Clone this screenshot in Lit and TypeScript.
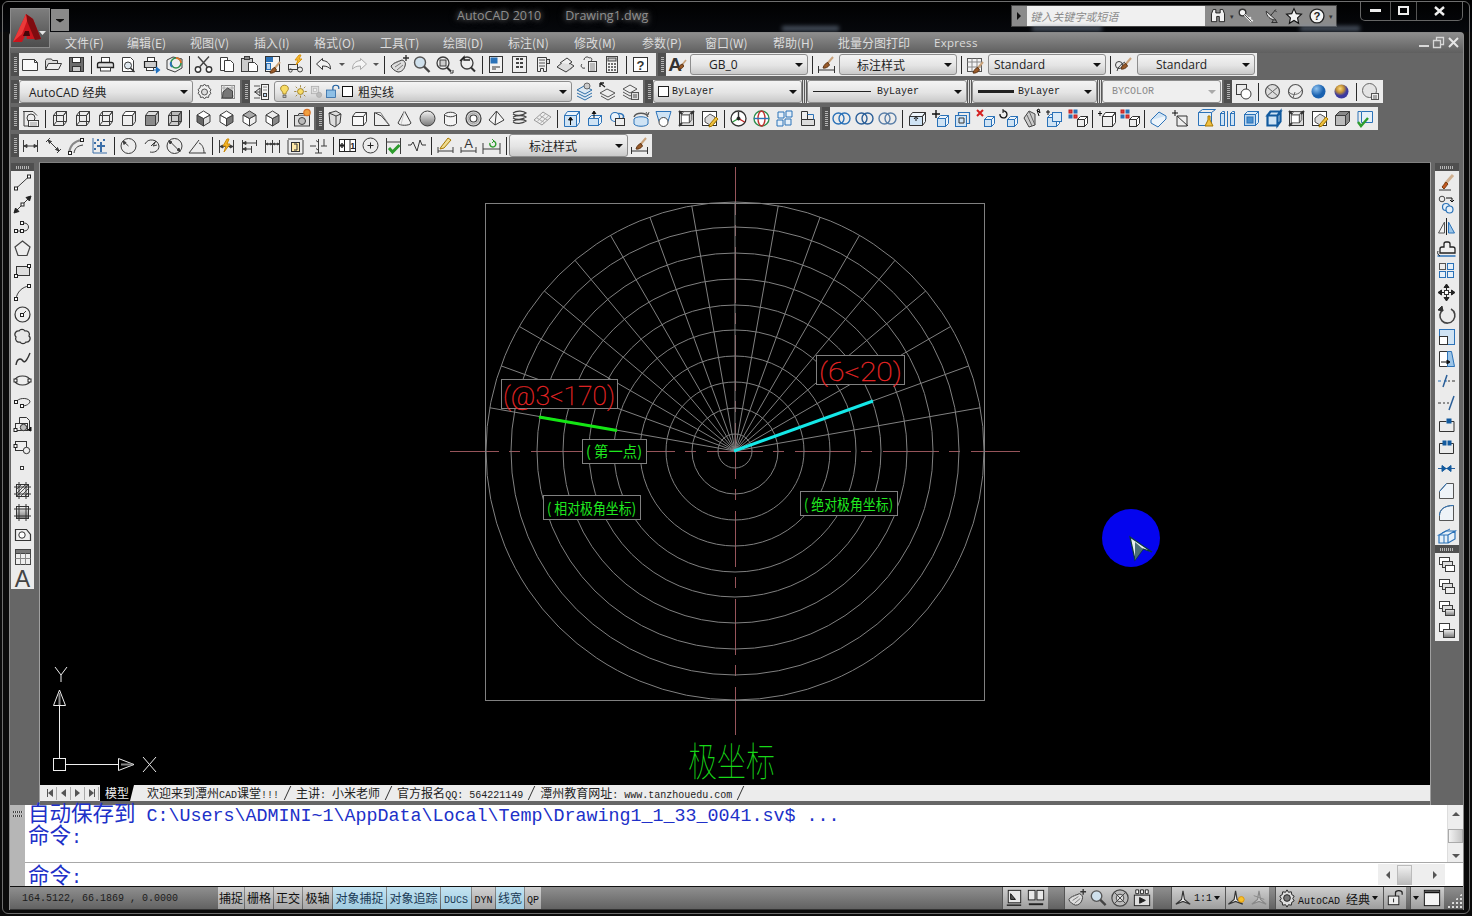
import { LitElement, html, svg, css } from "lit";
import { customElement } from "lit/decorators.js";
import { unsafeSVG } from "lit/directives/unsafe-svg.js";

const D = "#3c3c3c";
const B = "#2b72b8";
const M = "#7a7a7a";

const p = (d: string, s = D, f = "none", w = 1) =>
	`<path d="${d}" stroke="${s}" fill="${f}" stroke-width="${w}"/>`;
const r = (x: number, y: number, w: number, h: number, s = D, f = "none") =>
	`<rect x="${x}" y="${y}" width="${w}" height="${h}" stroke="${s}" fill="${f}"/>`;
const c = (x: number, y: number, rad: number, s = D, f = "none", w = 1) =>
	`<circle cx="${x}" cy="${y}" r="${rad}" stroke="${s}" fill="${f}" stroke-width="${w}"/>`;
const n = (x: number, y: number) => r(x - 1.5, y - 1.5, 3, 3, "#222", "#fff");
const t = (s: string, x: number, y: number, size: number, fill = "#333", weight = 700) =>
	`<text x="${x}" y="${y}" font-size="${size}" font-weight="${weight}" fill="${fill}" font-family="Liberation Sans, sans-serif" text-anchor="middle">${s}</text>`;

// wire cube, faces can be shaded
const cube = (s = D, front = "none", top = "none", side = "none", back = false) =>
	p("M5.5 8.5h10v10h-10z", s, front) +
	p("M5.5 8.5l3-4h10l-3 4z", s, top) +
	p("M15.5 8.5l3-4v10l-3 4z", s, side) +
	(back ? p("M8.5 4.5v10h10M8.5 14.5l-3 4", s) : "");
const hexa = (a: string, b: string, e: string) =>
	p("M11.5 11.5L5 8v7l6.5 4z", D, a) + p("M11.5 11.5L18 8v7l-6.5 4z", D, b) + p("M11.5 4L18 8l-6.5 3.5L5 8z", D, e);
const brush = (x = 0, y = 0) =>
	`<g transform="translate(${x} ${y})">` + p("M17 4L11 11", "#c9a27a", "none", 2) + p("M12 9.5c-2 .5-4 2-5 5.5 2 .5 5-.5 6.5-3z", "#5c3517", "#9a5a28") + "</g>";
const dim = (s = D) => p("M4.5 6v13M18.5 6v13M4.5 12.5h14", s) + p("M5 12.5l3-1.5v3zM18 12.5l-3-1.5v3z", s, s);
const draw = (a: string, b: string) =>
	r(4.5, 4.5, 10, 7, D, a) + r(7.5, 8.5, 10, 6, D, "#ddd") + r(10.5, 12.5, 9, 6, D, b);
const ring = (x: number, s = B) => c(x, 11.5, 5.5, s, "none", 1.4);

const ic: Record<string, string> = {
	new: p("M3.5 6.5h12l3 3v8h-15z", D, "#fafafa") + p("M15.5 6.5v3h3"),
	open: p("M3.5 16.5v-9l1-1.5h5l1 1.5h5v2.5", D, "#ddd") + p("M3.5 16.5l3-6h13l-3 6z", D, "#eee"),
	save: r(4.5, 4.5, 14, 14, "#333", "#6c6c6c") + r(7.5, 4.5, 8, 5, "#333", "#fff") + r(7.5, 13.5, 8, 5, "#333", "#ccc"),
	plot: r(7.5, 4.5, 8, 5, D, "#fff") + p("M5.5 9.5h12q2 0 2 2v3h-16v-3q0-2 2-2z", "#222", "#ddd", 1.3) + r(6.5, 14.5, 10, 3.5, D, "#fff"),
	prev: p("M5.5 4.5h8l3 3v11h-11z", D, "#fff") + c(11, 12.5, 3.5, D, "#dfe8ef") + p("M13.5 15l4 4", "#333", "none", 1.6),
	pub: r(7.5, 4.5, 7, 4, D, "#fff") + p("M4.5 8.5h12v6h-12z", "#222", "#ccc", 1.2) + r(6.5, 14.5, 7, 3, D, "#fff") + p("M13 17h5M16.5 14.5l3 2.5-3 2.5z", "#1c6fc0", "#1c6fc0", 1.2),
	dwf: p("M4 7l6-3 9 2v9l-7 4-8-3z", D, "#eee") + c(13, 10, 5, "#2f8f4f", "none", 1.6) + p("M13 5a5 5 0 0 1 5 5", "#e0702a", "none", 1.8) + p("M9 14a5 5 0 0 1-1-5", "#2b72b8", "none", 1.8),
	cut: p("M6 3.5l9 10M17 3.5l-9 10", "#444", "none", 1.4) + c(6, 16.5, 2.7, "#333", "#fff", 1.4) + c(17, 16.5, 2.7, "#333", "#fff", 1.4),
	copy: p("M5.5 4.5h7v13h-7z", D, "#fff") + p("M9.5 7.5h6l3 3v8h-9z", D, "#fff"),
	paste: r(3.5, 5.5, 11, 13, D, "#ccc") + r(6.5, 3.5, 5, 3, D, "#888") + p("M10.5 9.5h6l3 3v6h-9z", D, "#fff"),
	match: r(4.5, 3.5, 14, 15, "#333", "#f4f4f4") + r(5.5, 4.5, 6, 4, "#2b72b8", "#2b72b8") + r(5.5, 10.5, 4, 6, "#2b72b8", "#bcd6ee") + brush(2, 5),
	blk: r(4.5, 11.5, 9, 5, D, "#eee") + c(6.5, 17.5, 1.6) + c(16, 16.5, 2.5) + p("M15 2l-4 5h3l-2 5 6-6h-3l2-4z", "#d9940f", "#f7b92b"),
	undo: p("M9.5 5.5l-6 5.5 6 5.5v-3.5c4 0 6 1 8 3 0-5-3-8-8-8.5z", "#333", "#f2f2f2"),
	redo: p("M13.5 5.5l6 5.5-6 5.5v-3.5c-4 0-6 1-8 3 0-5 3-8 8-8.5z", "#aaa", "#f5f5f5"),
	pan: p("M4 13c2-2 3-3 6-4l5-2c3 1 4 3 3 6-1 4-4 6-7 6-3-1-6-3-7-6z", D, "#ddd") + p("M6 11l6-3M8 14l6-4M10 17l6-5", M) + p("M16 5h6M19 2v6", "#333", "none", 1.4),
	zoom: c(10, 9.5, 5.5, "#555", "#cfe0ec", 1.4) + p("M14 13.5l5.5 5.5", "#444", "none", 2.4),
	zoomw: c(10, 10, 6, D, "#eee", 1.3) + r(7, 7, 6, 6, D, "#ccc") + p("M14 14.5l4 4", "#333", "none", 2) + p("M17 20h3v-3", "#333"),
	zoomp: c(11, 10, 6, D, "#eee", 1.3) + p("M15 14.5l4 4", "#333", "none", 2) + p("M4 8l4-4v3h6", "#222", "none", 1.4),
	prop: r(4.5, 3.5, 13, 16, "#333", "#f2f2f2") + r(6, 5, 6, 5, "#2b72b8", "#2b72b8") + p("M7 14h8M7 16h4", "#333"),
	dc: r(4.5, 3.5, 14, 16, "#444", "#eee") + p("M8 6h3M12 6h3M8 10h3M12 10h3M8 14h3M12 14h3", "#444", "none", 2),
	pal: p("M6.5 4.5h9v14h-3v-3h-3v3h-3z", D, "#eee") + p("M8 7h6M8 10h6M8 13h6", "#888", "none", 1.6) + r(15.5, 6.5, 3, 4, D, "#ddd"),
	sheet: p("M3 14l8-7 9 6-8 6z", D, "#ddd") + p("M6 10l7-5 5 4-3 2", D, "#eee") + p("M5 12l3-2M15 17l3-2", M),
	mark: p("M7 7c0-3 4-4 5-2 2-1 4 1 2 3M5 11c-2 2 0 5 3 4", D, "none") + r(11.5, 8.5, 8, 10, D, "#eee") + p("M13 11h5M13 13h5M13 15h5M13 17h5", "#888"),
	calc: r(6.5, 3.5, 11, 16, "#444", "#f5f5f5") + r(8, 5, 8, 3, "#444", "#ccc") + p("M8 11h2M11 11h2M14 11h2M8 14h2M11 14h2M14 14h2M8 17h2M11 17h2M14 17h2", "#444", "none", 1.5),
	help: r(4.5, 4.5, 14, 14, "#333", "#fff") + t("?", 11.5, 16.5, 13),
	tstyle: t("A", 9, 18, 19) + p("M20 7l-4 5", "#c9a27a", "none", 1.6) + p("M16.5 11c-2 .5-3.5 2-4 5 2 .3 4-.5 5.2-3z", "#5c3517", "#9a5a28"),
	dstyle: p("M3.5 13v7M19.5 13v7M3.5 17h16", "#333") + brush(1, 0),
	tbstyle: r(3.5, 5.5, 14, 13, "#555", "#f4f4f4") + p("M3.5 9h14M8 5.5v13M13 5.5v13M3.5 14h14", "#888") + brush(2, 5),
	mstyle: p("M4 18c1-4 4-7 8-9", D) + c(6, 12, 3.5) + brush(1, 1),
	gear: p("M11.5 4l1.5 2 2.500-.5.5 2.500 2 1.500-1 2 1 2-2 1.500-.5 2.500-2.500-.5-1.500 2-1.500-2-2.500.5-.5-2.500-2-1.500 1-2-1-2 2-1.500.5-2.500 2.500.5z", "#555", "#eee") + c(11.5, 12, 3, "#555", "#ddd"),
	wsp: r(5.5, 5.5, 13, 13, "#888", "none") + p("M5 8h14M5 16h14M8 5v14M16 5v14", "#aaa") + p("M7 12l4.500-4 5 3v7h-10z", "#444", "#777"),
	layer: p("M4 6h6M4 12h6M4 18h6", "#555") + p("M5 12l5-4v8z", "#333") + r(11.5, 4.5, 7, 15, D, "#f4f4f4") + r(13.5, 13.5, 3, 3, D, "#bcd6ee") + p("M13 7h4M13 10h4", "#888"),
	lstate: p("M4 10l7-4 8 4-7 4zM4 13l8 4 7-4M4 16l8 4 7-4", "#2f6fa8", "#dbe8f3") + c(14, 6, 3, "#666", "#ccc"),
	lprev: p("M4 13l7-4 8 4-7 4zM5 16l7 4 7-4", "#555", "#eee") + p("M9 7L4 3M4 3v4M4 3h4", "#222", "none", 1.3),
	lcur: p("M4 9l7-4 7 4-7 4zM4 12l7 4 4-2M4 15l7 4 3-1", "#555", "#eee") + r(12.5, 12.5, 7, 7, "#555", "#ddd") + p("M14 15h4M14 17h4", "#555"),
	shade1: r(4.5, 4.5, 10, 10, D) + c(14, 14, 5, D, "#fff"),
	sph0: c(11.5, 11.5, 7, "#555", "#ddd", 1.2) + p("M6 7l11 9M17 7L6 16", "#666"),
	sph1: c(11.5, 11.5, 7, "#555", "#eee", 1.2) + p("M5 12c3 4 10 3 13-2M9 18l2-6", "#666"),
	sph2: `<defs><radialGradient id="bs" cx=".35" cy=".3"><stop offset="0" stop-color="#8fc3f0"/><stop offset="1" stop-color="#1a62b0"/></radialGradient><radialGradient id="os" cx=".4" cy=".3"><stop offset="0" stop-color="#ffd97a"/><stop offset=".55" stop-color="#c09038"/><stop offset="1" stop-color="#3c3aa0"/></radialGradient><linearGradient id="gg" x1="0" y1="0" x2="0" y2="1"><stop offset="0" stop-color="#f4f4f4"/><stop offset="1" stop-color="#777"/></linearGradient></defs>` + c(11.5, 11.5, 7, "none", "url(#bs)"),
	sph3: c(11.5, 11.5, 7, "none", "url(#os)"),
	shade2: c(10.500, 10.500, 7, "#666", "#e4e4e4") + r(12.5, 13.5, 7, 6, "#555", "#eee") + p("M14 16h4M14 18h4", "#666"),
	// row 3 views
	v1: cube(D, "none", "none", "none", true),
	v2: cube(D, "none", "none", "none", true) + p("M8.500 4.500h10", D),
	v3: cube(D, "none", "none", "none", true),
	v4: cube(D, "#eee", "#fff", "#ddd"),
	v5: cube(D, "#8a8a8a", "#ddd", "#bbb"),
	v6: cube(D, "#ccc", "#bbb", "#888", true),
	i1: hexa("#666", "#ddd", "#fff"),
	i2: hexa("#fff", "#777", "#fff"),
	i3: hexa("#fff", "#eee", "#aaa"),
	i4: hexa("#fff", "#888", "#eee"),
	cam: r(4.5, 8.500, 15, 10.500, D, "#ddd") + c(12, 14, 3.5, D, "#bbb") + p("M8 8.500l1-2h5l1 2", D, "#ccc") + c(17, 5.5, 3.2, "#d9742a", "#f0a040", 1.2),
	view: p("M4 4.500h10l4 4", D) + p("M5 4v15h5", D) + c(12, 11, 4, D, "#eee") + r(9.5, 13.5, 10, 6, D, "#f0f0f0") + p("M11 16h7M11 18h7", "#999"),
	polys: p("M5 6l7-2 5 3-1 9-5 4-5-3z", D, "#ddd") + p("M12 9v10M5 6l7 3 5-2", D),
	box: p("M5.5 9.500l3-4h11v9l-3 4h-11z", D, "#f8f8f8") + p("M5.5 9.500h11v9M16.5 9.500l3-4", D),
	wedge: p("M4.500 18.500v-13l7 3.500 8 9.500z", D, "#eee") + p("M4.500 5.500l6 0 9 13", M),
	cone: p("M11.500 4L5 16c1 3 12 3 13 0z", D, "#f2f2f2") + p("M11.500 4L8 17.500", "#ccc"),
	sphere: c(11.5, 11.5, 7.5, D, "url(#gg)"),
	cyl: p("M5.500 7.500c2-3 10-3 12 0v9c-2 3-10 3-12 0z", D, "#f4f4f4") + p("M5.500 7.500c2 3 10 3 12 0", D),
	torus: c(11.5, 11.5, 7.5, D, "#ddd", 1.2) + c(11.5, 11.5, 3.5, D, "#fff", 1.2) + c(11.5, 11.5, 5.5, "#999"),
	pyr: p("M11.500 4L4 13l6 5 9-5z", D, "#f4f4f4") + p("M11.500 4l-1.500 14", D),
	helix: p("M5 6c4-3 11-2 13 0-4 3-10 3-13 1M5 10c4-2 11-2 13 0-4 3-10 3-13 1M5 14c4-2 11-2 13 0-4 3-10 3-13 1", "#444", "none", 1.3),
	planar: p("M3 13l9-8 8 5-9 8z", "#999", "#eee") + p("M6 11l8 5M9 8.500l8 5M6.500 14l8-7M9.500 16l8-7", "#aaa"),
	ext: p("M4.500 8.500h12v11h-12z", B, "#cfe3f4") + p("M4.500 8.500l3-4h12l-3 4zM16.500 8.500l3-4v11l-3 4z", B, "#eaf3fb") + p("M10.500 18v-6", "#111") + p("M10.500 10l-2 3h4z", "#111", "#111"),
	press: p("M5.500 11.500h10v7h-10z", B, "#cfe3f4") + p("M5.500 11.500l3-3h10l-3 3zM15.500 11.500l3-3v7l-3 3z", B, "#eaf3fb") + p("M11 11V5M9 7l2-3 2 3", "#111", "#111"),
	sweep: p("M6 10c0-3 9-5 11-2 2 3-1 5-6 5", B, "none", 1.4) + c(9, 10, 4.5, B, "#eaf3fb", 1.2) + r(9.5, 11.5, 9, 7, "#333", "#eee"),
	rev: p("M5 10c2-5 12-5 14 0", "#555", "none", 1.4) + p("M5 12c2-3 12-3 14 0v5c-2 3-12 3-14 0z", B, "#cfe3f4") + p("M17 5l2 3 1-3", "#555"),
	loft: p("M4 4.500h15l-3 10H7z", B, "#cfe3f4") + c(11.5, 15, 4.500, "#444", "#fff"),
	plan: r(4.5, 4.5, 14, 14, "#333", "#ddd") + cube("#444", "#fff", "#eee", "#ccc").replace(/<path/g, '<path transform="translate(2 1) scale(.8)"') + p("M4 4l3 3M19 4l-3 3M4 19l3-3", "#333", "none", 2),
	edit: r(4.5, 4.5, 14, 14, "#333", "#fff") + p("M7 11l5-4 5 3v6l-5 2-5-3z", "#555", "#ddd") + p("M12 17l6-7 2 2-6 7-3 1z", "#a37a00", "#f0c040"),
	gizmo: c(11.5, 11.5, 7.5, "#333", "#fff", 1.3) + p("M11.500 11.500V5", "#333", "none", 1.4) + p("M11.500 11.500L5.500 15", "#2b9c3e", "none", 1.4) + p("M11.500 11.500l6 3.500", "#c02020", "none", 1.4) + c(11.5, 11.5, 1.5, "#222", "#222"),
	orbit: c(11.5, 11.5, 7.5, "#2f8f4f", "#fff", 1.4) + `<ellipse cx="11.5" cy="11.5" rx="3.500" ry="7.500" stroke="#c03030" fill="none" stroke-width="1.400"/>` + p("M4 11.500h15", "#2b72b8", "none", 1.4),
	arr3: p("M5 5h6v6H5zM13 4h6v6h-6zM4 13h6v6H4zM12 12h6v6h-6z", B, "#e6f0f9"),
	align: p("M5.500 4.500h6v8h-6z", "#333", "#eee") + p("M5.500 12.500h13v6h-13z", "#333", "#ddd") + p("M11.500 7.500h6v5", B),
	r1: ring(8.5) + ring(14.5),
	r2: ring(8.5, "#2b5f98") + ring(14.5, "#2b5f98"),
	r3: ring(8.5, "#5a7fa8") + ring(14.5, "#5a7fa8"),
	fext: p("M4.500 9.500h13v9h-13z", "#333", "#cfe3f4") + p("M4.500 9.500l3-4h13l-3 4zM17.500 9.500l3-4v9l-3 4z", "#333", "#eef5fb") + p("M11 14V11M9 12l2-2.500 2 2.500", "#111"),
	fmove: p("M8 3v8M4 7h8", "#111", "none", 1.4) + r(9.5, 11.5, 8, 8, B, "#cfe3f4") + p("M9.500 11.500l3-3h8l-3 3zM17.500 11.500l3-3v8l-3 3z", B, "#eef5fb"),
	foff: r(4.5, 8.5, 11, 11, B, "#cfe3f4") + p("M7.500 8.500v-3h11v11h-3", B, "none", 1.2) + p("M8 11h5v5h-5z", "#333"),
	fdel: p("M3 3l6 6M9 3L3 9", "#d42020", "none", 2) + r(10.5, 12.5, 7, 7, B, "#cfe3f4") + p("M10.500 12.500l3-3h7l-3 3zM17.500 12.500l3-3v7l-3 3z", B, "#eef5fb"),
	frot: p("M3 7a3.500 3.500 0 1 0 3-3", "#111", "none", 1.3) + p("M6 2v4", "#111") + r(10.5, 12.5, 7, 7, B, "#cfe3f4") + p("M10.500 12.500l3-3h7l-3 3zM17.500 12.500l3-3v7l-3 3z", B, "#eef5fb"),
	ftap: p("M4 11l5-7 6 3v11l-6 2z", "#444", "#ccc") + p("M9 4l6 14M7 8l5 11", "#666") + p("M17 3l3 3-1-4zM17 3l2 6", "#111"),
	fcopy: r(4.5, 10.5, 9, 9, B, "#cfe3f4") + p("M4.500 10.500l3-3h9l-3 3zM13.500 10.500l3-3v9l-3 3z", B, "#eef5fb") + r(9.5, 5.5, 9, 9, B, "#dcebf7") + p("M5 3v5M3 5h4", "#111"),
	fcolor: r(3, 3, 3, 3, "#c02020", "#e04040") + r(8, 3, 3, 3, "#2b72b8", "#2b72b8") + r(3, 8, 3, 3, "#2b72b8", "#2b72b8") + r(8, 8, 3, 3, "#c02020", "#e04040") + r(11.5, 12.5, 7, 7, "#333", "#eee") + p("M11.500 12.500l3-3h7l-3 3zM18.500 12.500l3-3v7l-3 3z", "#333", "#fff"),
	eimp: p("M5 4v5M3 6.500h4", "#111") + r(7.5, 9.5, 10, 10, "#333", "#eee") + p("M7.500 9.500l3-4h10l-3 4zM17.500 9.500l3-4v10l-3 4z", "#333", "#fff"),
	imp: p("M4 13l8-8 7 4-8 8z", B, "#cfe3f4") + p("M4 13v3l7 4 8-8V9", B, "#eef5fb"),
	sep3: p("M5 3v6M2 6h6", "#111") + p("M7 9h10v10H7zM7 9l11 10", "#333", "#eee"),
	clean: p("M5.500 5.500h13v13h-13z", B, "#e2eef8") + p("M5.500 5.500l4-3h13l-4 3", B, "none") + p("M15 9v4l-3 6h8l-3-6V9z", "#a77700", "#f0c040"),
	shell: r(4.5, 6.5, 4, 12, B, "#cfe3f4") + p("M11.500 4v16", B, "none", 1) + r(14.5, 6.5, 4, 12, B, "#cfe3f4") + p("M4.500 6.500l2-2h2v2M14.500 6.500l2-2h2v2", B),
	solidf: r(5.5, 7.5, 11, 11, B, "#bcd6ee") + r(8, 10, 6, 6, B, "#4a90cf") + p("M5.500 7.500l3-3h11l-3 3zM16.500 7.500l3-3v11l-3 3z", B, "#dcebf7"),
	boxbold: p("M5.500 8.500h10v10h-10zM5.500 8.500l3-4h10l-3 4zM15.500 8.500l3-4v10l-3 4z", "#125a9e", "#cfe3f4", 2.2),
	fcheck: p("M4.500 8.500h10v10h-10z", D, "#bbb") + p("M4.500 8.500l4-4h10l-4 4zM14.500 8.500l4-4v10l-4 4z", D, "#888"),
	chk: p("M7.500 4.500h11v11h-11z", B, "#e6f0f9") + p("M4 4.500h3M4 4.500v11", B) + p("M4 15l3 4 7-8", "#2d9c2d", "none", 2.4),
	// row 4 dims
	d1: p("M4.500 6v12M18.500 6v12M4.500 12h14", D) + p("M5 12l3-1.500v3zM18 12l-3-1.500v3z", D, D),
	d2: p("M4 8l4-4M15 19l4-4M6 6l11 11", D) + p("M6 6l3.500 1.500-2 2zM17 17l-3.500-1.500 2-2z", D, D),
	d3: p("M4 19c1-8 6-12 13-13", "#888", "none", 2) + p("M9 19c1-5 3-7 9-8", D) + n(5, 19) + n(17, 6),
	d4: p("M5 4v15h14", "#3a6ea8", "none", 1) + p("M9 6h2M15 6h2M9 12h8M13 8v10M6 9h2M6 15h2", "#3a6ea8", "none", 2),
	d5: c(11.5, 12, 7.5) + p("M11.500 12L6 7", D) + p("M6 7l1 3.500 2-2z", D, D),
	d6: p("M5 10a7.500 7.500 0 0 1 14 2c0 5-5 7-9 6", D) + p("M11 12l5-5-3 5 4-1", D) ,
	d7: c(11.5, 12, 7.5) + p("M6 6.500l11 11", D) + p("M6 6.500l1 3.500 2-2zM17 17.500l-1-3.500-2 2z", D, D),
	d8: p("M3 19h17M3 19l10-13", D) + p("M13 9c3 1 5 5 5 10", D),
	d9: dim() + p("M12 5l-4 7h3l-2 6 6-8h-3l2-5z", "#c98a0a", "#f5b424"),
	d10: p("M4.500 6v13M4.500 9h14M4.500 15h9M18.500 6v6M13.500 12v7", D) + p("M5 9l3-1.500v3zM5 15l3-1.500v3z", D, D),
	d11: p("M4.500 6v13M11.500 6v13M18.500 6v13M4.500 10h14", D) + p("M5 10l2-1v2zM11 10l-2-1v2zM12 10l2-1v2zM18 10l-2-1v2z", D, D),
	d12: p("M4 6v14M19 6v14M4 5h15M4 20h15", D) + r(7.5, 8.5, 8, 9, "#333", "#ffe9a8") + p("M10 10h3v6h-3", "#333"),
	d13: p("M3 12h6M14 12h6M11.500 5v14M8 19h7M17 5v7", D) + p("M11 16l-2-1.500M11 8l-2-1.500", D),
	tol: r(3.5, 5.5, 16, 12, "#222", "#fff") + p("M8.500 5.500v12M14 5.500v12", "#222") + c(6, 11.5, 1.6, "#222") + p("M6 9v5M3.500 11.500h5", "#222") + t("1", 16.700, 15, 9, "#222"),
	center: c(11.5, 11.5, 7.5) + p("M8.500 11.500h6M11.500 8.500v6", "#222"),
	insp: p("M4.500 4v16M18.500 4v16M4.500 8h14", D) + p("M7 14l3.500 4 7-7", "#2d9c2d", "none", 3),
	jog: p("M3 11h3l2-3 4 9 3-11 2 5h4", "#333", "none", 1),
	dimed: p("M4 13v6M19 13v6M4 17h15", D) + p("M7 13l7-9 3 2-7 8-4 1z", "#a77700", "#f0dd90"),
	dimt: p("M4 13v6M19 13v6M4 17h15", D) + t("A", 11.5, 13.5, 13, "#333", 400),
	dimup: p("M3 9v11M20 9v11M3 15h17", D) + p("M10 9a3 3 0 1 0 3-2", "#2d9c2d", "none", 1.4) + p("M12 5l2 2-2 2", "#2d9c2d"),
	// left toolbar
	line: p("M5 17.500L18 5.500") + n(5, 17.5) + n(18, 5.5) ,
	xline: p("M5 18L18 5") + p("M3 20l1.500-5 3.500 3.500zM20 3l-1.500 5-3.500-3.500z", "#222", "#222") + n(11.5, 11.5),
	pline: p("M5 16h8c6 0 6-8 0-8h-2") + n(5, 16) + n(11, 16) + n(11, 8),
	polyg: p("M11.500 4l7.500 6-3 8.500H7L4 10z", "#444", "#ededed", 1.2),
	rect: r(5.5, 7.5, 13, 9, "#333", "#ddd") + n(18, 7) + n(5, 17),
	arc: p("M5 18C6 11 11 6 18 5") + n(5, 18) + n(18, 5),
	circ: c(11.5, 11.5, 7.5, "#333", "#eee", 1.2) + p("M11 12l4-4") + n(11, 12),
	cloud: p("M8 6a3.500 3.500 0 0 1 6 0a3.500 3.500 0 0 1 4 5a3.500 3.500 0 0 1-3 6a3.500 3.500 0 0 1-6 0a3.500 3.500 0 0 1-4-5a3.500 3.500 0 0 1 3-6z", "#333", "#e8e8e8", 1.2),
	spl: p("M5 18c1-7 5-7 7-4s5-3 7-8", "#333", "none", 1.4),
	ell: `<ellipse cx="11.5" cy="11.5" rx="7.500" ry="4.500" stroke="#333" fill="#eee" stroke-width="1.200"/>` + n(4.5, 11.5) + n(18.5, 11.5),
	earc: p("M5 11c2-4 11-5 14-1 0 3-4 5-8 5") + n(5, 11) + n(11, 15),
	ins: p("M8.500 4.500h7l3 3v9h-10z", "#333", "#f0f0f0") + r(4.5, 10.5, 12, 7, "#333", "#eee") + c(12.500, 14.500, 3.2, "#333", "#bbb") + n(4.5, 17) + p("M17 17l3-3v4z", "#111", "#111"),
	mblk: r(4.5, 6.5, 11, 9, "#333", "#eee") + n(4.5, 11) + c(15.5, 15.5, 3.2, "#333", "#eee"),
	pnt: r(9.5, 9.5, 3, 3, "#333", "#fff"),
	hatch: r(5.5, 5.5, 12, 12, "#333", "#e8e8e8") + p("M6 10l4-4M6 14l8-8M6 17l11-11M10 17l7-7M14 17l3-3", "#555") + p("M3 8h17M3 15h17M8 3v17M15 3v17", "#333"),
	grad: r(5.5, 5.5, 12, 12, "#333", "url(#gg)") + p("M3 8h17M3 15h17M8 3v17M15 3v17", "#333"),
	reg: p("M4.500 6.500h11l4 5v6h-15z", "#333", "#eee", 1.2) + c(11, 12, 3.2, "#333", "#fff"),
	table: r(4.5, 4.5, 15, 15, "#444", "#eee") + r(4.5, 4.5, 15, 4, "#444", "#777") + p("M4.500 13.500h15M9.500 8.500v11M14.500 8.500v11", "#888"),
	mtext: t("A", 11.5, 19.5, 23, "#444", 400),
	// right toolbar
	erase: p("M4 19h12", "#333") + p("M18 4l-8 9", "#d0b090", "none", 3) + p("M11 11l-4 5 2 2 4-5z", "#7a3e12", "#c4571e"),
	cpy: c(7, 6, 2.800, "#444") + c(11, 14, 3.500, B, "#e6f0f9", 1.2) + c(14.5, 16.5, 3.500, B, "#e6f0f9", 1.2) + p("M11 5h6v4M15 7l2 2 2-2", "#111"),
	mir: p("M11.500 3v17", "#222") + p("M9.500 7v11h-6z", "#555", "#f2f2f2") + p("M13.500 7v11h6z", B, "#9cc5e8"),
	off: p("M5 16v-4q0-2 2-2h2V7q0-2 2-2h2q2 0 2 2v3h3q2 0 2 2v4z", "#222", "#f0f0f0", 1.3) + p("M2.500 19h18", B, "none", 1.5) + p("M5 19c-2-1-3-3-2-5", "#222"),
	array: r(4.5, 4.5, 6, 6, "#555", "#eee") + r(12.5, 4.5, 6, 6, B, "#e6f0f9") + r(4.5, 12.5, 6, 6, B, "#e6f0f9") + r(12.5, 12.5, 6, 6, B, "#e6f0f9"),
	move: r(9.5, 9.5, 4, 4, "#333", "#fff") + p("M11.500 3l-2.500 3.500h5zM11.500 20l-2.500-3.500h5zM3 11.500l3.500-2.500v5zM20 11.500l-3.500-2.500v5z", "#222", "#222") + p("M11.500 6v3M11.500 14v3M6 11.500h3M14 11.500h3", "#222"),
	rot: p("M16 6a7.500 7.500 0 1 1-8 .500", "#444", "none", 1.6) + p("M7 3l1 5-5-1z", "#333", "#333"),
	scale: r(4.5, 4.5, 15, 15, B, "#cfe3f4") + r(4.5, 11.5, 8, 8, "#333", "#fff"),
	stretch: p("M4.500 4.500h8v15h-8z", "#333", "#fff") + p("M12.500 4.500h4l3 15h-7z", B, "#9cc5e8") + p("M6 15h8", "#111") + p("M15 15l-3-2v4z", "#111", "#111"),
	trim: p("M3 12h3M9 12h3", B, "none", 1.2) + p("M13 12h2M17 12h3", "#333", "none", 1) + p("M8 18l4-12", "#2b5f98", "none", 1.5),
	extd: p("M3 12h3M8 12h2M12 12h2", "#333") + p("M14 19l5-14", "#2b5f98", "none", 1.5),
	bp: p("M4.500 18.500v-10h7M16 8.500h3v10h-14.500", "#333") + r(12, 6, 4, 4, "#125a9e", "#125a9e"),
	brk: p("M4.500 8.500v10h14v-10h-3M8.500 8.500h-4", "#333") + r(8, 6, 3, 4, "#125a9e", "#125a9e") + r(13, 6, 3, 4, "#125a9e", "#125a9e"),
	join: p("M3 11.500h17", "#2b5f98") + p("M7 8.500l4 3-4 3zM16 8.500l-4 3 4 3z", "#125a9e", "#125a9e"),
	chf: p("M4.500 19.500v-7l7-8h7v15z", "#555", "#eef3f8") + p("M4.500 12.500l7-8", B),
	flt: p("M4.500 19.500v-5c0-6 5-10 14-10v15z", "#555", "#eef3f8") + p("M4.500 14.500c0-6 5-10 14-10", B),
	expl: p("M4 12l7-4h9l-7 4zM4 12v8h9v-8M13 12l7-4v8l-7 4", B, "#e6f0f9", 1.2) + p("M9 12v8M7 10l8-4", B) ,
	do1: draw("#fff", "#fff"),
	do2: draw("#fff", "#eee"),
	do3: draw("#fff", "url(#gg)"),
	do4: r(4.5, 4.5, 10, 8, D, "#fff") + r(8.5, 10.5, 11, 8, D, "url(#gg)"),
	// status
	smodel: r(5.5, 3.5, 13, 13, "#222", "#e8e8e8") + p("M8 13V7l5 6z", "#111", "#555") + p("M4 19h15", "#222", "none", 1.5),
	slayout: r(3.5, 3.5, 7, 10, "#222", "#e8e8e8") + r(12.5, 3.5, 7, 10, "#222", "#e8e8e8") + p("M4 18h15", "#222", "none", 2),
	swheel: c(11.5, 11.5, 8.5, "#444", "#bbb", 1.2) + c(11.5, 11.5, 4, "#444", "#ddd") + p("M6 6l11 11M17 6L6 17", "#444"),
	smotion: r(3.5, 8.5, 16, 11, "#222", "#ddd") + p("M5 3h3v4H5zM10 3h3v4h-3zM15 3h3v4h-3z", "#222", "#fff") + p("M9 11l6 3-6 3z", "#222", "#222"),
	sanno: p("M11.500 4l1.500 9 6 5-7.500-3-7.500 3 6-5z", "#333", "#fff", 1.2),
	sanno2: p("M10 4l1.500 9 6 5-7.500-3-7.500 3 6-5z", "#333", "#eee", 1.2) + c(16, 13, 3, "#d9940f", "#f7c02b"),
	sanno3: p("M11.500 4l1.500 9 6 5-7.500-3-7.500 3 6-5z", "#888", "#ccc", 1.2) + p("M6 9l11 4", "#888"),
	sgear: p("M11.500 3l1.500 2.500 3-.5.5 3 2.500 1.500-1.500 2.500 1.500 2.500-2.500 1.500-.5 3-3-.5-1.500 2.500-1.500-2.500-3 .5-.5-3-2.500-1.500 1.500-2.500-1.500-2.500 2.500-1.500.5-3 3 .5z", "#222", "#ddd") + c(11.5, 11.5, 3.5, "#222", "#777"),
	slock: r(4.5, 9.5, 11, 9, "#222", "#eee") + p("M12 9.500V6c0-3 7-3 7 0v2", "#222", "none", 1.3) + p("M10 12v4", "#222"),
	swin: r(3.5, 3.5, 16, 16, "#111", "#f4f4f4") + p("M4 5.500h15", "#111", "none", 2),
	// title search group
	bino: p("M4 9l2-5h3v4h5V4h3l2 5v9h-6v-6h-3v6H4z", "#111", "#f2f2f2"),
	key: c(7.5, 7.5, 3.800, "#333", "#f4f4f4", 1.6) + p("M10 10l8 8M15 15l2-2M17.500 17.500l1.500-1.500", "#f4f4f4", "none", 2.4) + p("M10 10l8 8", "#333"),
	sat: p("M6 6c0 6 5 10 11 10z", "#222", "#ddd") + p("M11 11l6-7M12 19h7M14 16l-1 3M17 16l1 3M16 5l2 2", "#222"),
	star: p("M11.500 3l2.600 5.800 6 .7-4.500 4.200 1.200 6.200-5.300-3.200-5.300 3.200 1.200-6.200-4.500-4.200 6-.7z", "#111", "#f4f4f4", 1.3),
	qmark: c(11.5, 11.5, 8, "#222", "#f4f4f4", 1.5) + t("?", 11.5, 16.5, 13, "#222"),
};

const rows: any[][][] = [
	[
		["new", "open", "save", "|", "plot", "prev", "pub", "dwf", "|", "cut", "copy", "paste", "match", "blk", "|", "undo", "v", "redo", "v", "|", "pan", "zoom", "zoomw", "zoomp", "|", "prop", "dc", "pal", "sheet", "mark", "calc", "|", "help", 3],
		["tstyle", { w: 118, pad: 18, text: "GB_0" }, "|", "dstyle", { w: 118, pad: 17, text: "标注样式" }, "|", "tbstyle", { w: 118, pad: 5, text: "Standard" }, "|", "mstyle", { w: 118, pad: 18, text: "Standard" }],
	],
	[
		[{ w: 174, pad: 9, text: "AutoCAD 经典", flush: true }, "gear", "wsp"],
		["layer", { w: 298, pad: 0, layer: true, text: "粗实线" }, "lstate", "lprev", "lcur"],
		[{ w: 149, pad: 17, text: "ByLayer", swatch: true, mono: true, flush: true }, "||", { w: 160, pad: 0, text: "ByLayer", stroke: 1, mono: true, flush: true }, "||", { w: 125, pad: 0, text: "ByLayer", stroke: 2, mono: true, flush: true }, "||", { w: 119, pad: 9, text: "BYCOLOR", mono: true, off: true, flush: true }],
		["shade1", "|", "sph0", "sph1", "sph2", "sph3", "|", "shade2"],
	],
	[
		["view", "|", "v1", "v2", "v3", "v4", "v5", "v6", "|", "i1", "i2", "i3", "i4", "|", "cam"],
		["polys", "box", "wedge", "cone", "sphere", "cyl", "torus", "pyr", "helix", "planar", "|", "ext", "press", "sweep", "rev", "loft", "plan", "edit", "|", "gizmo", "orbit", "arr3", "align"],
		["r1", "r2", "r3", "|", "fext", "fmove", "foff", "fdel", "frot", "ftap", "fcopy", "fcolor", "|", "eimp", "fcolor", "|", "imp", "sep3", "clean", "shell", "solidf", "boxbold", "plan", "edit", "fcheck", "chk"],
	],
	[
		["d1", "d2", "d3", "d4", "|", "d5", "d6", "d7", "d8", "|", "d9", "d10", "d11", "d12", "d13", "|", "tol", "center", "insp", "jog", "|", "dimed", "dimt", "dimup", "|", { w: 119, pad: 19, text: "标注样式", flush: true }, "dstyle"],
	],
];

const menu: [string, number][] = [
	["文件(F)", 62], ["编辑(E)", 63], ["视图(V)", 64], ["插入(I)", 60], ["格式(O)", 66], ["工具(T)", 63], ["绘图(D)", 65],
	["标注(N)", 66], ["修改(M)", 68], ["参数(P)", 63], ["窗口(W)", 68], ["帮助(H)", 65], ["批量分图打印", 96], ["Express", 50],
];
const leftTools = ["line", "xline", "pline", "polyg", "rect", "arc", "circ", "cloud", "spl", "ell", "earc", "ins", "mblk", "pnt", "hatch", "grad", "reg", "table", "mtext"];
const rightTools = ["erase", "cpy", "mir", "off", "array", "move", "rot", "scale", "stretch", "trim", "extd", "bp", "brk", "join", "chf", "flt", "expl"];
const orderTools = ["do1", "do2", "do3", "do4"];
const toggles: [string, number, boolean][] = [
	["捕捉", 26, false], ["栅格", 28, false], ["正交", 28, false], ["极轴", 29, false], ["对象捕捉", 53, true], ["对象追踪", 53, true],
	["DUCS", 30, true], ["DYN", 23, false], ["线宽", 28, true], ["QP", 16, false],
];
const tabs = ["欢迎来到潭州CAD课堂!!!", "主讲: 小米老师", "官方报名QQ: 564221149", "潭州教育网址: www.tanzhouedu.com"];
const glows = [[782, 57], [1032, 70], [1300, 60]];

// ring radii and polar spokes of the sheet
const CX = 735;
const CY = 451;
const radii = [17, 43, 69, 95, 121, 146, 172, 198, 224, 249];
const spokes = Array.from({ length: 17 }, (_, i) => (i + 1) * 10);

const labels = [
	{ x: 501, y: 379, w: 116, h: 29, text: "(@3<170)", tx: 503, ty: 405, tw: 112, size: 26, cls: "red" },
	{ x: 816, y: 355, w: 88, h: 29, text: "(6<20)", tx: 819, ty: 381, tw: 83, size: 26, cls: "red" },
	{ x: 582, y: 439, w: 64, h: 24, text: "( 第一点)", tx: 586, ty: 457, tw: 56, size: 15, cls: "grn" },
	{ x: 543, y: 495, w: 97, h: 24, text: "( 相对极角坐标)", tx: 547, ty: 514, tw: 89, size: 15, cls: "grn" },
	{ x: 800, y: 491, w: 97, h: 24, text: "( 绝对极角坐标)", tx: 804, ty: 510, tw: 89, size: 15, cls: "grn" },
];

@customElement("app-root")
export class AppRoot extends LitElement {
	static styles = css`
		:host {
			display: block;
			position: relative;
			width: 1472px;
			height: 916px;
			overflow: hidden;
			background: #0a0a0a;
			font-family: "Noto Sans CJK SC", "Open Sans", sans-serif;
			color: #111;
		}
		svg { display: block; flex: none; }
		.lat { font-family: "Liberation Mono", monospace; font-size: 0.8334em; }
		.outline {
			position: absolute;
			inset: 1px 2px 2px 2px;
			border: 1px solid #6e6e6e;
			border-radius: 6px;
			pointer-events: none;
		}
		.glow {
			position: absolute;
			top: 26px;
			height: 5px;
			background: #7d8da3;
			filter: blur(2px);
			opacity: 0.55;
		}
		.title {
			height: 32px;
			box-sizing: border-box;
			display: flex;
			align-items: flex-start;
			padding: 8px 0 0 10px;
			background: linear-gradient(#000, #06080c);
			position: relative;
		}
		.app {
			width: 40px;
			height: 40px;
			background: linear-gradient(#7d7d7d, #4d4d4d);
			border: 1px solid #8c8c8c;
			box-sizing: border-box;
			position: relative;
			z-index: 2;
		}
		.qat {
			width: 18px;
			height: 22px;
			margin: 1px 0 0 1px;
			background: #8a8a8a;
			display: flex;
			align-items: center;
			justify-content: center;
		}
		.qat i { width: 8px; height: 5px; background: #111; clip-path: polygon(0 30%, 100% 30%, 100% 45%, 50% 100%, 0 45%); }
		.cap {
			color: #8e8e8e;
			font: 12.500px "Open Sans", sans-serif;
			text-shadow: 0 0 5px #666, 0 0 9px #666;
			margin-top: 0;
			line-height: 16px;
		}
		.cap.a { margin-left: 388px; }
		.cap.b { margin-left: 24px; }
		.search {
			margin: -3px 0 0 363px;
			width: 326px;
			height: 22px;
			background: #8b8b8b;
			display: flex;
			align-items: center;
			border: 1px solid #444;
			box-sizing: border-box;
		}
		.search .tri { width: 0; height: 0; margin: 0 6px 0 5px; border-left: 4px solid #111; border-top: 4px solid transparent; border-bottom: 4px solid transparent; }
		.search .box {
			width: 178px;
			height: 20px;
			background: #f0f0f0;
			color: #8a8a8a;
			font-style: italic;
			font-size: 11px;
			line-height: 21px;
			padding-left: 3px;
			box-sizing: border-box;
			margin-right: 2px;
		}
		.search svg { width: 20px; height: 20px; margin-left: 1px; }
		.mini { font-size: 7px; color: #333; width: 7px; text-align: center; }
		.wbtns {
			margin: -7px 0 0 23px;
			display: flex;
			height: 19px;
			border: 1px solid #666;
			border-top: none;
			border-radius: 0 0 5px 5px;
			box-sizing: content-box;
		}
		.wbtns div { display: flex; align-items: center; justify-content: center; border-left: 1px solid #555; }
		.wbtns div:first-child { width: 29px; border-left: none; }
		.wbtns div:nth-child(2) { width: 25px; }
		.wbtns div:nth-child(3) { width: 45px; }

		.win {
			margin: 0 8px 0 9px;
			width: 1455px;
			box-sizing: border-box;
			border-left: 1px solid #8a8a8a;
			border-right: 1px solid #8a8a8a;
			border-top: 1px solid #888;
			border-radius: 4px 4px 0 0;
			background: #666;
			position: relative;
		}
		.menu {
			height: 20px;
			box-sizing: border-box;
			padding-bottom: 2px;
			background: linear-gradient(#8d8d8d, #5f5f5f);
			display: flex;
			align-items: center;
			padding-left: 55px;
			color: #dcdcdc;
			font-size: 12px;
			position: relative;
		}
		.menu span { flex: none; white-space: nowrap; }
		.menu .en { font-family: "Open Sans", sans-serif; font-size: 11.500px; letter-spacing: 0.3px; }
		.mdi { position: absolute; right: 2px; top: 2px; display: flex; }
		.rows {
			padding: 0 0 0 1px;
			display: flex;
			flex-direction: column;
			gap: 4px;
		}
		.row { display: flex; height: 23px; gap: 2px; }
		.bar { display: flex; height: 23px; }
		.grip {
			width: 8px;
			flex: none;
			background-color: #4f4f4f;
			background-image: repeating-linear-gradient(#b5b5b5 0 1px, #4f4f4f 1px 2px);
			background-size: 3px 15px;
			background-position: center;
			background-repeat: no-repeat;
		}
		.body {
			display: flex;
			align-items: center;
			background: #ececec;
			padding-right: 1px;
			height: 23px;
		}
		.ic { width: 23px; height: 23px; flex: none; }
		.sep { width: 6px; flex: none; display: flex; justify-content: center; }
		.sep::after { content: ""; width: 1px; height: 18px; background: #2a2a2a; }
		.dsep { width: 5px; height: 23px; flex: none; background: #5a5a5a; display: flex; justify-content: center; gap: 1px; }
		.dsep::before, .dsep::after { content: ""; width: 1px; background: #ddd; }
		.drop { width: 11px; flex: none; display: flex; justify-content: center; }
		.drop::after { content: ""; border-top: 3px solid #555; border-left: 3px solid transparent; border-right: 3px solid transparent; }
		.spacer { flex: none; }
		.combo {
			height: 21px;
			flex: none;
			margin: 0 1px;
			border: 1px solid #8d8d8d;
			border-radius: 3px;
			box-sizing: border-box;
			background: linear-gradient(#f4f4f4, #e4e4e4 55%, #c9c9c9);
			display: flex;
			align-items: center;
			position: relative;
			font: 12px "Open Sans", "Noto Sans CJK SC", sans-serif;
			color: #222;
			white-space: nowrap;
		}
		.combo.flush { margin: 0; height: 23px; }
		.combo.off { background: #efefef; color: #8a8a8a; }
		.combo.mono { font-family: "Liberation Mono", "Noto Sans CJK SC", monospace; font-size: 10px; }
		.combo.off::after { border-top-color: #aaa; }
		.combo::after {
			content: "";
			position: absolute;
			right: 4px;
			top: 50%;
			margin-top: -2px;
			border-top: 4px solid #111;
			border-left: 4px solid transparent;
			border-right: 4px solid transparent;
		}
		.combo .sw { width: 11px; height: 11px; border: 1px solid #222; background: #fff; box-sizing: border-box; margin: 0 3px 0 -13px; }
		.combo .st { margin: 0 0 0 5px; background: #222; flex: none; }
		.combo .st.t1 { height: 1px; width: 58px; margin-right: 6px; }
		.combo .st.t2 { height: 3px; width: 36px; margin-right: 4px; }
		.combo .ci { width: 17px; height: 17px; margin-right: -1px; }
		.combo .lt { margin-left: 5px; color: #222; }
		.combo .lsq { width: 9px; height: 9px; border: 1px solid #111; background: #fff; margin: 0 0 0 2px; box-sizing: content-box; }

		.main { display: flex; padding-top: 5px; height: 648px; box-sizing: border-box; position: relative; }
		.lcol { width: 29px; flex: none; padding: 1px 0 0 1px; box-sizing: border-box; }
		.rcol { width: 32px; flex: none; padding: 1px 0 0 4px; box-sizing: border-box; }
		.vbar { width: 23px; background: #ebebeb; box-sizing: border-box; }
		.rcol .vbar { width: 24px; }
		.vgrip {
			height: 8px;
			background-color: #4f4f4f;
			background-image: repeating-linear-gradient(90deg, #b5b5b5 0 1px, #4f4f4f 1px 2px);
			background-size: 14px 3px;
			background-position: center;
			background-repeat: no-repeat;
		}
		.vbar .vic { width: 23px; height: 22px; display: flex; align-items: center; justify-content: center; }
		.view { width: 1392px; flex: none; border-left: 1px solid #a0a0a0; border-right: 1px solid #a0a0a0; border-top: 1px solid #808080; box-sizing: border-box; }
		.sheet { width: 1390px; height: 622px; background: #000; overflow: visible; }
		.sheet text { font-family: "Roboto", "Noto Sans CJK SC", sans-serif; }
		.sheet .red { fill: #ff3030; stroke: #e02020; stroke-width: 0.3px; font-weight: 100; }
		.sheet .grn { fill: #1fe81f; font-family: "Noto Sans CJK SC", sans-serif; }
		.sheet .big { fill: #18d818; font-family: "Noto Sans CJK SC", sans-serif; font-weight: 100; }
		.tabs {
			height: 16px;
			background: #ececec;
			display: flex;
			align-items: center;
			font-size: 12px;
			color: #222;
			white-space: nowrap;
			padding-left: 3px;
			position: relative;
		}
		.tabs .nav { width: 14px; height: 13px; flex: none; border-right: 1px solid #aaa; display: flex; align-items: center; justify-content: center; box-sizing: border-box; font-size: 0; }
		.tabs .nav i { border-top: 4px solid transparent; border-bottom: 4px solid transparent; }
		.tabs .nav i.l { border-right: 5px solid #555; }
		.tabs .nav i.r { border-left: 5px solid #555; }
		.tabs .nav b { width: 1px; height: 8px; background: #555; }
		.model { width: 34px; height: 16px; flex: none; margin: 0 5px 0 1px; background: #000; color: #eee; text-align: center; line-height: 15px; clip-path: polygon(4px 0, 100% 0, calc(100% - 4px) 100%, 0 100%, 0 0); }
		.tab { flex: none; height: 16px; line-height: 15px; padding: 0 9px 0 8px; position: relative; }
		.tab::after { content: ""; position: absolute; right: 0; top: 1px; height: 14px; width: 1px; background: #333; transform: skewX(-25deg); }
		.cmdwrap { display: flex; height: 81px; }
		.cmdgrip { width: 15px; flex: none; background: #b6b6b6; border-top: 4px solid #b6b6b6; box-sizing: border-box; font-size: 0; }
		.cmdgrip i { display: block; width: 10px; height: 2px; margin: 2px auto 0; background: repeating-linear-gradient(90deg, #444 0 1px, #ccc 1px 2px); }
		.cmd { flex: 1; background: #fff; color: #2030c8; font-size: 21.500px; position: relative; min-width: 0; }
		.cmdlog { height: 58px; border-bottom: 1px solid #a8a8a8; padding-left: 3px; box-sizing: border-box; }
		.cmdlog div { height: 21px; line-height: 20px; white-space: pre; }
		.cmdlog div:first-child { position: relative; top: -3px; }
		.cmdlog div:nth-child(2) { position: relative; top: -2px; }
		.cmdlog .lat, .cmdin .lat { font-size: 18.330px; }
		.cmdin { height: 23px; padding-left: 3px; line-height: 22px; }
		.vs { width: 16px; flex: none; background: #eee; height: 57px; border-left: 1px solid #ddd; position: absolute; right: 0; top: 0; box-sizing: border-box; }
		.vs .th { position: absolute; top: 24px; left: 0; width: 15px; height: 14px; background: linear-gradient(90deg, #f2f2f2, #c4c4c4); border: 1px solid #aaa; box-sizing: border-box; }
		.vs .up, .vs .dn, .hs .up, .hs .dn { position: absolute; }
		.vs .up { top: 7px; left: 4px; border-bottom: 4px solid #555; border-left: 4px solid transparent; border-right: 4px solid transparent; }
		.vs .dn { bottom: 4px; left: 4px; border-top: 4px solid #555; border-left: 4px solid transparent; border-right: 4px solid transparent; }
		.hs { position: absolute; right: 18px; top: 59px; width: 67px; height: 21px; background: #eee; }
		.hs .th { position: absolute; left: 19px; top: 1px; width: 15px; height: 20px; background: linear-gradient(#f0f0f0, #bcbcbc); border: 1px solid #bbb; box-sizing: border-box; }
		.hs .up { left: 8px; top: 7px; border-right: 4px solid #555; border-top: 4px solid transparent; border-bottom: 4px solid transparent; }
		.hs .dn { right: 8px; top: 7px; border-left: 4px solid #555; border-top: 4px solid transparent; border-bottom: 4px solid transparent; }
		.status {
			height: 22px;
			display: flex;
			align-items: stretch;
			background: linear-gradient(#8f8f8f, #626262);
			border-top: 1px solid #111;
			border-bottom: 1px solid #333;
			box-sizing: content-box;
			font-size: 12px;
		}
		.coords { width: 208px; flex: none; padding-left: 12px; box-sizing: border-box; font: 10px/24px "Liberation Mono", monospace; color: #1c1c1c; white-space: pre; }
		.tg { display: flex; gap: 1px; flex: none; }
		.tg div { flex: none; background: linear-gradient(#d2d2d2, #a5a5a5); text-align: center; line-height: 22px; color: #111; overflow: hidden; }
		.tg div.on { background: linear-gradient(#c4e4f2, #9fcbe0); color: #1a3a55; }
		.sgroup { display: flex; align-items: center; flex: none; background: linear-gradient(#cfcfcf, #9d9d9d); border-left: 1px solid #555; box-sizing: border-box; height: 22px; }
		.sgroup .ic { width: 22px; height: 22px; }
		.sgroup .tx { font: 10px "Liberation Mono", "Noto Sans CJK SC", monospace; color: #111; white-space: pre; }
		.sgroup .tx .cj { font-size: 12px; font-family: "Noto Sans CJK SC", sans-serif; }
		.sgroup i { border-top: 4px solid #111; border-left: 3px solid transparent; border-right: 3px solid transparent; margin: 0 2px; }
		.dots { width: 18px; flex: none; margin-left: 1px; background-image: radial-gradient(#ddd 1px, transparent 1.2px); background-size: 4px 4px; background-position: bottom right; clip-path: polygon(100% 25%, 100% 100%, 0 100%); }
	`;

	private icon(name: string) {
		return html`<svg class="ic" viewBox="0 0 23 23">${unsafeSVG(ic[name])}</svg>`;
	}

	private mixed(s: string) {
		return s.split(/([\x20-\x7e]+)/).map((part, i) => (i % 2 ? html`<span class="lat">${part}</span>` : part));
	}

	private combo(o: any) {
		const cls = `combo ${o.flush ? "flush" : ""} ${o.mono ? "mono" : ""} ${o.off ? "off" : ""}`;
		const style = `width:${o.w}px;padding-left:${o.pad}px`;
		if (o.layer) {
			return html`<div class=${cls} style=${style}>
				<span style="width:1px"></span>
				<svg class="ci" viewBox="0 0 23 23">${unsafeSVG(p("M11.500 3c-4 0-6 3-5 6 1 2 3 3 3 6h4c0-3 2-4 3-6 1-3-1-6-5-6z", "#8a6a10", "#f8dc66") + r(9.5, 16.5, 4, 3, "#555", "#bbb"))}</svg>
				<svg class="ci" viewBox="0 0 23 23">${unsafeSVG(c(11.5, 11.5, 4, "#8a6a10", "#f8dc66") + p("M11.500 3v3M11.500 17v3M3 11.500h3M17 11.500h3M5 5l2 2M16 16l2 2M18 5l-2 2M7 16l-2 2", "#8a6a10"))}</svg>
				<svg class="ci" viewBox="0 0 23 23">${unsafeSVG(r(4.5, 4.5, 10, 10, "#aaa", "#ddd") + r(7.5, 7.5, 4, 4, "#bbb", "#eee") + c(15, 16, 3.5, "#aaa", "#bbb"))}</svg>
				<svg class="ci" viewBox="0 0 23 23">${unsafeSVG(r(3.5, 9.5, 12, 10, "#1f5f9f", "#8fc0e6") + p("M12 9.500V6c0-4 8-4 8 0v2", "#1f5f9f", "none", 1.6))}</svg>
				<span class="lsq"></span>
				<span class="lt">${o.text}</span>
			</div>`;
		}
		return html`<div class=${cls} style=${style}>
			${o.swatch ? html`<span class="sw"></span>` : ""}
			${o.stroke ? html`<span class="st t${o.stroke}"></span>` : ""}
			<span>${o.text}</span>
		</div>`;
	}

	private item(it: any) {
		if (it === "|") return html`<span class="sep"></span>`;
		if (it === "||") return html`<span class="dsep"></span>`;
		if (it === "v") return html`<span class="drop"></span>`;
		if (typeof it === "number") return html`<span class="spacer" style="width:${it}px"></span>`;
		if (typeof it === "object") return this.combo(it);
		return this.icon(it);
	}

	private title() {
		return html`<div class="title">
			<div class="app">
				<svg viewBox="0 0 38 38" width="38" height="38">
					<polygon points="15,5 22,10 30,30 16,30 15,25 11,33 2,33" fill="#c9141c" />
					<polygon points="15,5 22,10 30,30 24,31 16,12" fill="#7e0c10" />
					<polygon points="15,5 16,12 11,25 4,31 2,33" fill="#ea3a3a" />
					<polygon points="14,22 18,22 19,27 12,27" fill="#450609" />
					<polygon points="28,22 35,22 31.500,26" fill="#e6e6e6" />
				</svg>
			</div>
			<div class="qat"><i></i></div>
			<span class="cap a">AutoCAD 2010</span>
			<span class="cap b">Drawing1.dwg</span>
			<div class="search">
				<span class="tri"></span>
				<span class="box">键入关键字或短语</span>
				<svg viewBox="0 0 23 23">${unsafeSVG(ic.bino)}</svg><span class="mini">▾</span>
				<svg viewBox="0 0 23 23">${unsafeSVG(ic.key)}</svg>
				<svg viewBox="0 0 23 23" style="margin-left:5px">${unsafeSVG(ic.sat)}</svg>
				<svg viewBox="0 0 23 23" style="margin-left:3px">${unsafeSVG(ic.star)}</svg>
				<svg viewBox="0 0 23 23" style="margin-left:3px">${unsafeSVG(ic.qmark)}</svg><span class="mini">▾</span>
			</div>
			<div class="wbtns">
				<div><svg width="11" height="5"><rect width="11" height="3" y="1" fill="#eee" /></svg></div>
				<div><svg width="11" height="9"><rect x="1" y="1" width="9" height="7" fill="none" stroke="#eee" stroke-width="2" /></svg></div>
				<div><svg width="11" height="10"><path d="M1 1l9 8M10 1l-9 8" stroke="#eee" stroke-width="2.400" /></svg></div>
			</div>
		</div>`;
	}

	private sheet() {
		const line = (a: number, rad: number) => {
			const th = (a * Math.PI) / 180;
			return svg`<line x1=${CX} y1=${CY} x2=${CX + rad * Math.cos(th)} y2=${CY - rad * Math.sin(th)} />`;
		};
		return html`<svg class="sheet" viewBox="40 163 1390 622" width="1390" height="622">
			<g stroke="#96545a" fill="none">
				<line x1="735.5" y1="167" x2="735.5" y2="735" stroke-dasharray="56 10 11 11" stroke-dashoffset="8" />
				<line x1="450" y1="451.500" x2="1020" y2="451.500" stroke-dasharray="56 10 11 11" stroke-dashoffset="7" />
			</g>
			<g stroke="#808080" fill="none">
				<rect x="485.500" y="203.500" width="499" height="497" />
				${radii.map((v) => svg`<circle cx=${CX} cy=${CY} r=${v} />`)}
				${spokes.map((a) => line(a, 249))}
			</g>
			<line x1="539" y1="417" x2="617" y2="430.500" stroke="#14e614" stroke-width="3" />
			<line x1="734" y1="451" x2="873" y2="401" stroke="#14e8e8" stroke-width="3" />
			${labels.map(
				(l) => svg`
				<rect x=${l.x + 0.5} y=${l.y + 0.5} width=${l.w} height=${l.h} fill="#000" stroke="#808080" />
				<text class=${l.cls} x=${l.tx} y=${l.ty} font-size=${l.size} textLength=${l.tw} lengthAdjust="spacingAndGlyphs">${l.text}</text>`,
			)}
			<text class="big" x="688" y="776" font-size="40" textLength="87" lengthAdjust="spacingAndGlyphs">极坐标</text>
			<g stroke="#eee" fill="none">
				<path d="M59.500 705V758M66 764.500H118" />
				<rect x="53.500" y="758.500" width="12" height="12" />
				<path d="M53.500 705.500L59.500 690L65.500 705.500Z" />
				<path d="M118.500 758.500L134 764.500L118.500 770.500Z" />
				<path d="M59.500 693V705M121 764.500H132" stroke="#888" stroke-width="2" />
				<path d="M55 667L61 675L67 667M61 675V682" />
				<path d="M143 757L156 772M156 757L143 772" />
			</g>
			<circle cx="1131" cy="538" r="29" fill="#0404ee" />
			<path d="M1130 537L1152 552L1143 549L1135 560Z" fill="#e8eeee" stroke="#0d3a40" stroke-width="1.300" />
			<path d="M1135 542L1143 549L1135 560Z" fill="#4b6f76" />
		</svg>`;
	}

	private sgroup(width: number, margin: number, content: unknown) {
		return html`<div class="sgroup" style="width:${width}px;margin-left:${margin}px">${content}</div>`;
	}

	render() {
		return html`
			${this.title()}
			${glows.map(([x, w]) => html`<div class="glow" style="left:${x}px;width:${w}px"></div>`)}
			<div class="outline"></div>
			<div class="win">
				<div class="menu">
					${menu.map(([m, w], i) => html`<span class=${i === 13 ? "en" : ""} style="width:${w}px">${m}</span>`)}
					<div class="mdi">
						<svg width="15" height="15"><path d="M3 11h10" stroke="#d8d8d8" stroke-width="2" /></svg>
						<svg width="15" height="15"><path d="M2.500 5.500h7v7h-7zM5.500 5V2.500h7v7H10" stroke="#d8d8d8" fill="none" stroke-width="1.300" /></svg>
						<svg width="15" height="15"><path d="M3 3l9 9M12 3l-9 9" stroke="#e6e6e6" stroke-width="2" /></svg>
					</div>
				</div>
				<div class="rows">
					${rows.map(
						(row) => html`<div class="row">
							${row.map(
								(bar) => html`<div class="bar"><span class="grip"></span><div class="body">${bar.map((it) => this.item(it))}</div></div>`,
							)}
						</div>`,
					)}
				</div>
				<div class="main">
					<div class="lcol">
						<div class="vbar">
							<div class="vgrip"></div>
							<div class="vlist">${leftTools.map((n) => html`<div class="vic">${this.icon(n)}</div>`)}</div>
						</div>
					</div>
					<div class="view">
						${this.sheet()}
						<div class="tabs">
							<span class="nav"><b></b><i class="l"></i></span>
							<span class="nav"><i class="l"></i></span>
							<span class="nav"><i class="r"></i></span>
							<span class="nav"><i class="r"></i><b></b></span>
							<span class="model">模型</span>
							${tabs.map((s) => html`<span class="tab">${this.mixed(s)}</span>`)}
						</div>
					</div>
					<div class="rcol">
						<div class="vbar">
							<div class="vgrip"></div>
							<div class="vlist">${rightTools.map((n) => html`<div class="vic">${this.icon(n)}</div>`)}</div>
						</div>
						<div class="vbar">
							<div class="vgrip"></div>
							<div class="vlist">${orderTools.map((n) => html`<div class="vic">${this.icon(n)}</div>`)}</div>
						</div>
					</div>
				</div>
				<div class="cmdwrap">
					<div class="cmdgrip"><i></i><i></i></div>
					<div class="cmd">
						<div class="cmdlog">
							<div>${this.mixed("自动保存到 C:\\Users\\ADMINI~1\\AppData\\Local\\Temp\\Drawing1_1_33_0041.sv$ ...")}</div>
							<div>${this.mixed("命令:")}</div>
						</div>
						<div class="cmdin">${this.mixed("命令:")}</div>
						<div class="vs"><span class="up"></span><span class="th"></span><span class="dn"></span></div>
						<div class="hs"><span class="up"></span><span class="th"></span><span class="dn"></span></div>
					</div>
				</div>
				<div class="status">
					<div class="coords">164.5122, 66.1869 , 0.0000</div>
					<div class="tg">
						${toggles.map(([s, w, on]) => html`<div class=${on ? "on" : ""} style="width:${w}px">${this.mixed(s)}</div>`)}
					</div>
					<div style="flex:1"></div>
					${this.sgroup(46, 0, html`${this.icon("smodel")}${this.icon("slayout")}`)}
					${this.sgroup(89, 16, html`${this.icon("pan")}${this.icon("zoom")}${this.icon("swheel")}${this.icon("smotion")}`)}
					${this.sgroup(54, 18, html`${this.icon("sanno")}<span class="tx">1:1</span><i></i>`)}
					${this.sgroup(44, 0, html`${this.icon("sanno2")}${this.icon("sanno3")}`)}
					${this.sgroup(108, 6, html`${this.icon("sgear")}<span class="tx">AutoCAD <span class="cj">经典</span></span><i></i>`)}
					${this.sgroup(23, 0, this.icon("slock"))}
					${this.sgroup(34, 4, html`<i></i>${this.icon("swin")}`)}
					<div class="dots"></div>
				</div>
			</div>
		`;
	}
}
